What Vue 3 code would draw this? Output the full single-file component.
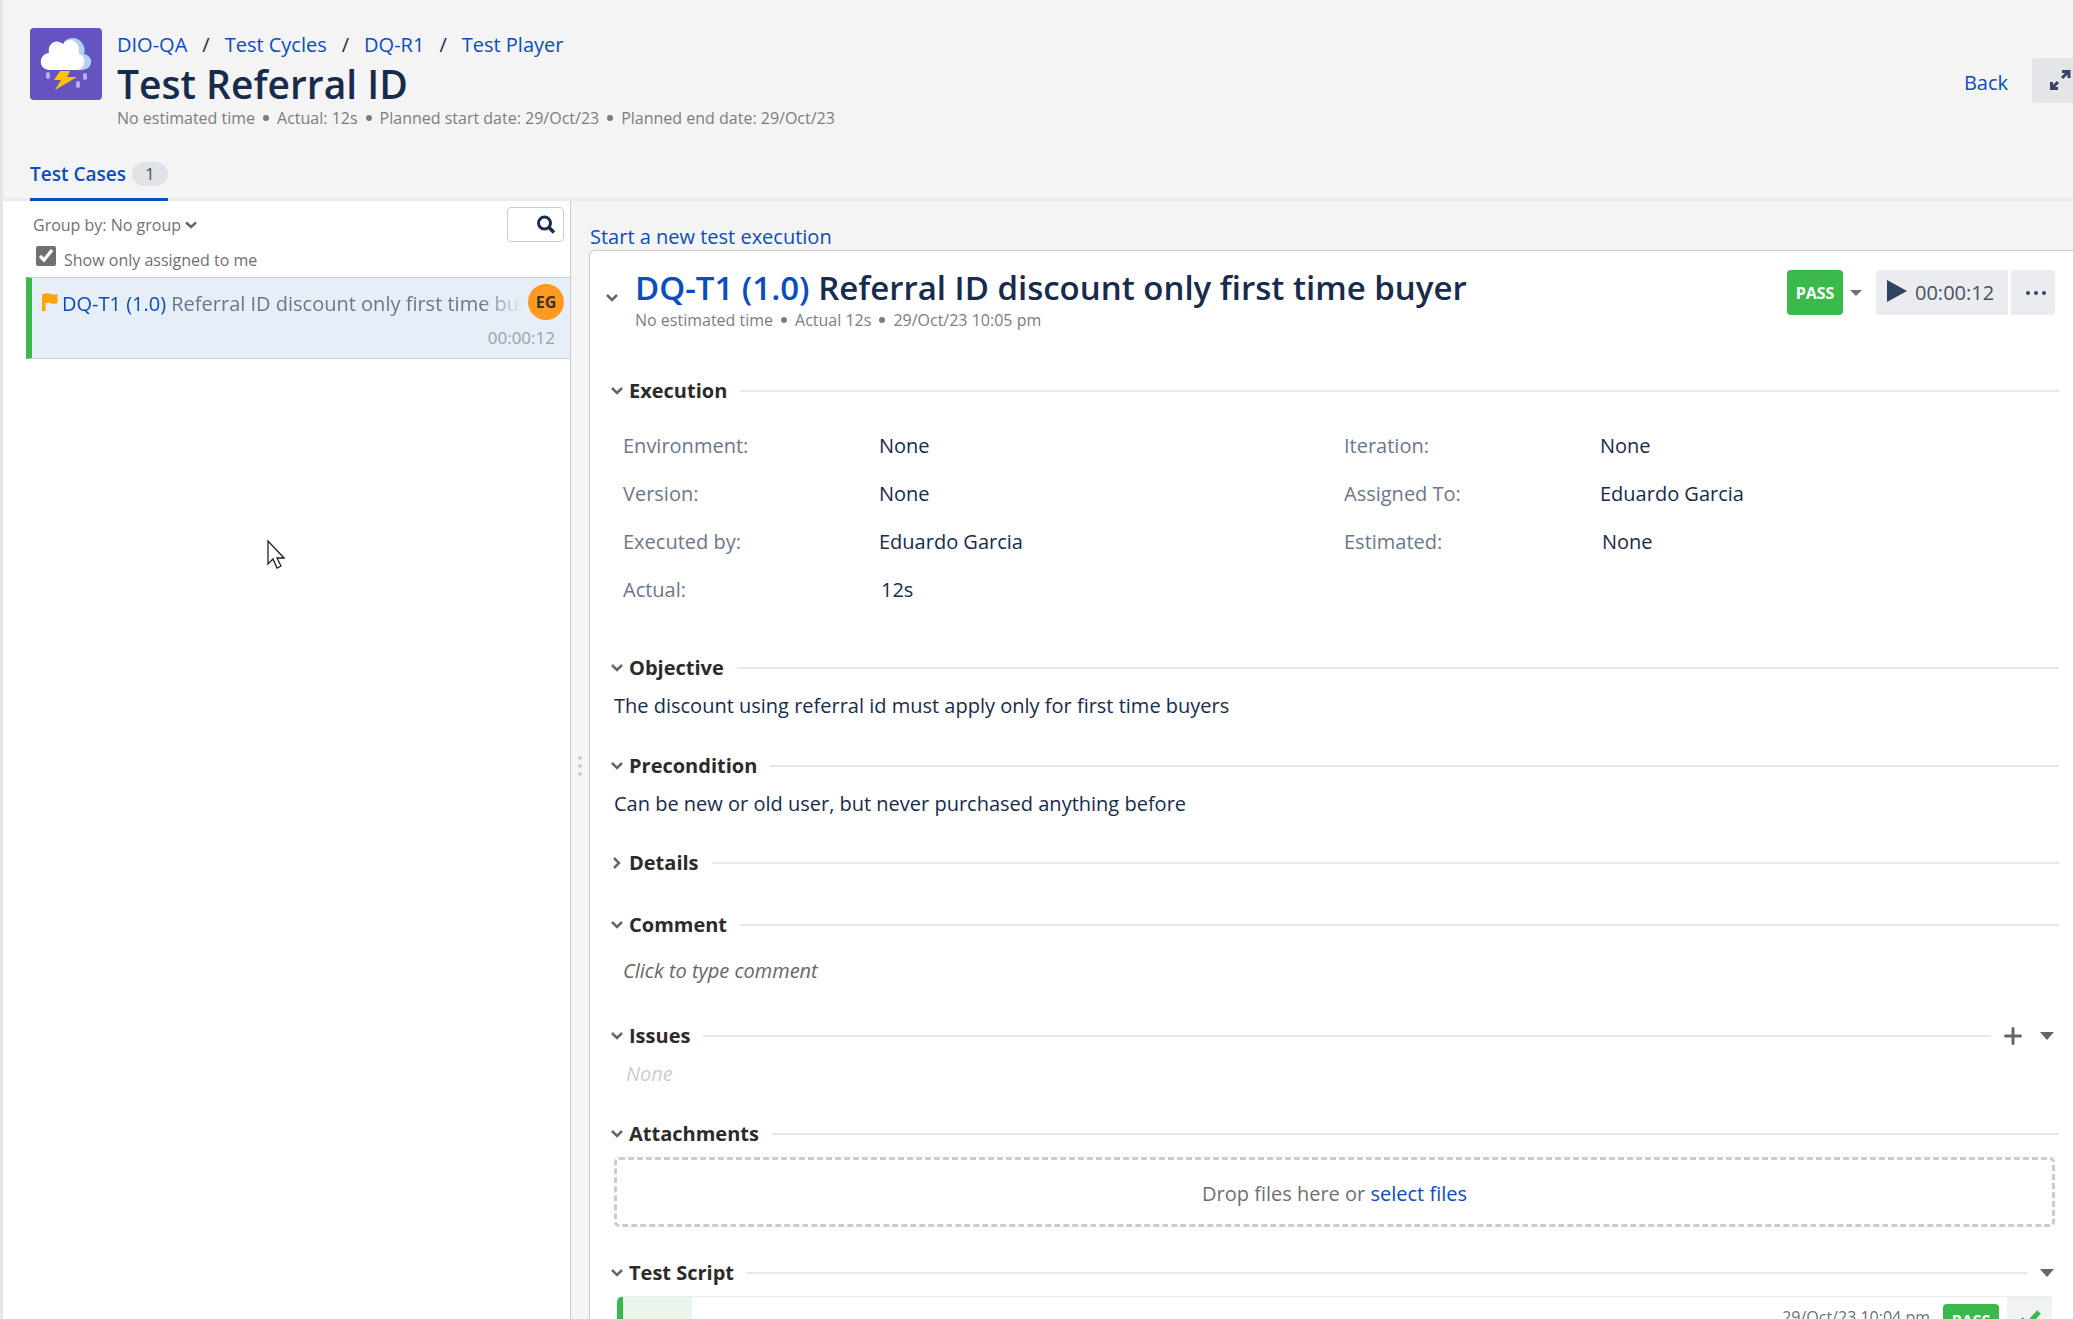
<script setup>
import { ref } from 'vue'

const crumbs = ['DIO-QA', 'Test Cycles', 'DQ-R1', 'Test Player']
const cycleMeta = ['No estimated time', 'Actual: 12s', 'Planned start date: 29/Oct/23', 'Planned end date: 29/Oct/23']
const caseMeta = ['No estimated time', 'Actual 12s', '29/Oct/23 10:05 pm']
const onlyMine = ref(true)

const fieldColumns = [
  [
    { label: 'Environment:', value: 'None' },
    { label: 'Version:', value: 'None' },
    { label: 'Executed by:', value: 'Eduardo Garcia' },
    { label: 'Actual:', value: '12s', time: true },
  ],
  [
    { label: 'Iteration:', value: 'None' },
    { label: 'Assigned To:', value: 'Eduardo Garcia' },
    { label: 'Estimated:', value: 'None', time: true },
  ],
]

const sections = [
  { id: 'execution', title: 'Execution', open: true },
  { id: 'objective', title: 'Objective', open: true, text: 'The discount using referral id must apply only for first time buyers' },
  { id: 'precondition', title: 'Precondition', open: true, text: 'Can be new or old user, but never purchased anything before' },
  { id: 'details', title: 'Details', open: false },
  { id: 'comment', title: 'Comment', open: true },
  { id: 'issues', title: 'Issues', open: true, add: true, menu: true },
  { id: 'attachments', title: 'Attachments', open: true },
  { id: 'script', title: 'Test Script', open: true, menu: true },
]
</script>

<template>
  <div class="page">
    <header class="top">
      <div class="cycle">
        <svg class="logo" viewBox="0 0 72 72" aria-hidden="true">
          <rect width="72" height="72" rx="4" fill="#6554c0" />
          <path d="M34 14c4-5 14-6 18 1 3 4 3 8 2 11 5 1 8 5 7 9-1 5-5 7-10 7H36z" fill="#b3d0fb" />
          <path d="M20 42c-12 0-12-16-1-17-2-10 8-15 14-9 5-8 18-4 16 10 8 2 7 16-3 16z" fill="#fff" />
          <path d="M30 43h10l-3 6h10L25 62l6-10h-7z" fill="#ffc400" />
          <g fill="#b8acf0">
            <rect x="16" y="44" width="4" height="7" rx="2" />
            <rect x="53" y="45" width="4" height="7" rx="2" />
            <rect x="46" y="53" width="4" height="7" rx="2" />
          </g>
        </svg>
        <div class="cycle-text">
          <nav class="crumbs" aria-label="Breadcrumb">
            <template v-for="(c, i) in crumbs" :key="c">
              <span v-if="i" class="slash">/</span>
              <a href="#">{{ c }}</a>
            </template>
          </nav>
          <h1>Test Referral ID</h1>
          <ul class="meta">
            <li v-for="m in cycleMeta" :key="m">{{ m }}</li>
          </ul>
        </div>
        <a class="back" href="#">Back</a>
        <button class="expand" type="button" aria-label="Full screen">
          <svg width="22" height="22" viewBox="0 0 22 22" fill="none" stroke="#344563" stroke-width="3">
            <path d="M13 9l6-6M13 2.500h7V9M9 13l-6 6M2.500 13v6.500H9" />
          </svg>
        </button>
      </div>
      <nav class="tabs">
        <a class="tab" href="#">Test Cases <span class="count">1</span></a>
      </nav>
    </header>

    <div class="body">
      <aside class="side">
        <div class="filters">
          <button class="group" type="button">
            Group by: No group
            <svg width="12" height="8" viewBox="0 0 12 8" fill="none" stroke="#666" stroke-width="2.500"><path d="M1 1.500l5 4.500 5-4.500" /></svg>
          </button>
          <button class="search" type="button" aria-label="Search">
            <svg width="20" height="20" viewBox="0 0 20 20" fill="none" stroke="#172b4d">
              <circle cx="8.500" cy="8" r="6" stroke-width="3" /><path d="M13 12.500l5 5" stroke-width="3.500" />
            </svg>
          </button>
        </div>
        <label class="mine">
          <input v-model="onlyMine" type="checkbox" />
          <span>Show only assigned to me</span>
        </label>
        <div class="case">
          <div class="case-main">
            <svg class="flag" width="16" height="19" viewBox="0 0 16 19" aria-hidden="true">
              <path d="M0 1.500C4-.5 7 .2 9 1s4 .8 6.500 0v9c-3 1.200-5 1-7 .3-2-.7-3.500-.8-5 0V18H0z" fill="#ffa408" />
            </svg>
            <p class="case-name"><a href="#">DQ-T1 (1.0)</a> Referral ID discount only first time buyer</p>
            <span class="avatar">EG</span>
          </div>
          <span class="case-time">00:00:12</span>
        </div>
      </aside>

      <div class="splitter" aria-hidden="true"><i></i><i></i><i></i></div>

      <main class="main">
        <a class="start" href="#">Start a new test execution</a>
        <article class="card">
          <div class="card-head">
            <button class="toggle" type="button" aria-label="Collapse">
              <svg width="12" height="8" viewBox="0 0 12 8" fill="none" stroke="#666" stroke-width="2.500"><path d="M1 1l5 5 5-5" /></svg>
            </button>
            <div class="card-title">
              <h2><a href="#">DQ-T1 (1.0)</a> Referral ID discount only first time buyer</h2>
              <ul class="meta">
                <li v-for="m in caseMeta" :key="m">{{ m }}</li>
              </ul>
            </div>
            <div class="actions">
              <button class="pass" type="button">PASS</button>
              <button class="caret" type="button" aria-label="Change status">
                <svg width="12" height="6" viewBox="0 0 12 6"><path d="M0 0h12L6 6z" fill="#707070" /></svg>
              </button>
              <button class="timer" type="button">
                <svg width="20" height="22" viewBox="0 0 20 22"><path d="M0 0l20 11L0 22z" fill="#2f4362" /></svg>
                <span>00:00:12</span>
              </button>
              <button class="more" type="button" aria-label="More">
                <svg width="20" height="4" viewBox="0 0 20 4" fill="#344563"><circle cx="2" cy="2" r="2" /><circle cx="10" cy="2" r="2" /><circle cx="18" cy="2" r="2" /></svg>
              </button>
            </div>
          </div>

          <section v-for="s in sections" :key="s.id" class="section" :class="s.id">
            <div class="section-head">
              <button class="section-toggle" type="button">
                <svg v-if="s.open" width="12" height="12" viewBox="0 0 12 12" fill="none" stroke="#666" stroke-width="2.500"><path d="M1 3l5 5 5-5" /></svg>
                <svg v-else width="12" height="12" viewBox="0 0 12 12" fill="none" stroke="#666" stroke-width="2.500"><path d="M3 1l5 5-5 5" /></svg>
                {{ s.title }}
              </button>
              <span class="rule"></span>
              <button v-if="s.add" class="plain" type="button" aria-label="Add issue">
                <svg width="18" height="18" viewBox="0 0 18 18" stroke="#666" stroke-width="3" stroke-linecap="round"><path d="M9 1.500v15M1.500 9h15" /></svg>
              </button>
              <button v-if="s.menu" class="plain" type="button" aria-label="Section menu">
                <svg width="14" height="8" viewBox="0 0 14 8"><path d="M0 0h14L7 8z" fill="#666" /></svg>
              </button>
            </div>

            <div v-if="s.id === 'execution'" class="fields">
              <dl v-for="(col, i) in fieldColumns" :key="i">
                <div v-for="f in col" :key="f.label" class="field">
                  <dt>{{ f.label }}</dt>
                  <dd :class="{ time: f.time }">{{ f.value }}</dd>
                </div>
              </dl>
            </div>
            <p v-else-if="s.text" class="text">{{ s.text }}</p>
            <button v-else-if="s.id === 'comment'" class="comment-box" type="button">Click to type comment</button>
            <p v-else-if="s.id === 'issues'" class="none">None</p>
            <div v-else-if="s.id === 'attachments'" class="drop">Drop files here or&nbsp;<a href="#">select files</a></div>
            <div v-else-if="s.id === 'script'" class="step">
              <div class="step-index"></div>
              <span class="step-date">29/Oct/23 10:04 pm</span>
              <button class="step-pass" type="button">PASS</button>
              <button class="step-check" type="button" aria-label="Pass step">
                <svg width="22" height="18" viewBox="0 0 22 18" fill="none" stroke="#3bb94b" stroke-width="5"><path d="M2 9l6 6L20 2" /></svg>
              </button>
            </div>
          </section>
        </article>
      </main>
    </div>

    <svg class="pointer" width="18" height="29" viewBox="0 0 18 29" aria-hidden="true">
      <path d="M1 1v23l5-5 4 9 4-2-4-8h7z" fill="#fff" stroke="#222" stroke-width="1.300" />
    </svg>
  </div>
</template>

<style>
body {
  margin: 0;
}
</style>

<style scoped>
.page {
  position: relative;
  display: flex;
  flex-direction: column;
  height: 100vh;
  overflow: hidden;
  box-sizing: border-box;
  border-left: 3px solid #e6e6e6;
  background: #f4f4f4;
  color: #172b4d;
  font-family: "Open Sans", "Noto Sans", sans-serif;
  font-size: 20px;
  line-height: 28px;
}
.page * {
  box-sizing: border-box;
}
a {
  color: #0b4cc0;
  text-decoration: none;
}
button {
  border: 0;
  padding: 0;
  background: none;
  color: inherit;
  font: inherit;
}
svg {
  flex: none;
  display: block;
}
h1, h2, p, ul, dl, dd {
  margin: 0;
  padding: 0;
}

/* header */
.top {
  flex: none;
  border-bottom: 3px solid #ebebeb;
}
.cycle {
  display: flex;
  padding: 28px 0 0 27px;
}
.logo {
  width: 72px;
  height: 72px;
}
.cycle-text {
  flex: 1;
  padding-left: 15px;
}
.crumbs {
  display: flex;
  gap: 15px;
  line-height: 34px;
}
h1 {
  font-size: 39px;
  font-weight: 600;
  line-height: 44px;
}
.meta {
  display: flex;
  list-style: none;
  color: #7d7d7d;
  font-size: 16px;
  line-height: 24px;
}
.meta li + li::before {
  content: "";
  display: inline-block;
  width: 6px;
  height: 6px;
  margin: 0 8px;
  border-radius: 50%;
  background: #7d7d7d;
  vertical-align: 3px;
}
.back {
  margin: 41px 24px 0 0;
}
.expand {
  display: flex;
  align-items: center;
  width: 57px;
  height: 45px;
  margin: 30px -16px 0 0;
  padding: 0 0 2px 17px;
  border-radius: 4px;
  background: #e4e5e9;
}
.tabs {
  display: flex;
  padding: 28px 0 0 27px;
}
.tab {
  display: flex;
  align-items: center;
  gap: 6px;
  height: 43px;
  margin-bottom: -3px;
  padding-bottom: 8px;
  border-bottom: 3px solid #0b4fb8;
  font-size: 19px;
  font-weight: 600;
}
.count {
  width: 36px;
  border-radius: 12px;
  background: #e0e2e7;
  color: #42526e;
  font-size: 17px;
  font-weight: 400;
  line-height: 24px;
  text-align: center;
}

/* body */
.body {
  flex: 1;
  display: flex;
  min-height: 0;
}
.side {
  flex: none;
  width: 568px;
  border-right: 1px solid #ccc;
  background: #fff;
  color: #707070;
  font-size: 16px;
}
.filters {
  display: flex;
  justify-content: space-between;
  padding: 6px 6px 0 30px;
}
.group {
  display: flex;
  align-items: center;
  gap: 4px;
  height: 35px;
}
.search {
  display: flex;
  align-items: center;
  justify-content: flex-end;
  width: 57px;
  height: 35px;
  padding-right: 7px;
  border: 1px solid #ccc;
  border-radius: 4px;
  background: #fff;
}
.mine {
  display: flex;
  gap: 8px;
  height: 35px;
  padding: 4px 0 0 33px;
}
.mine input {
  width: 20px;
  height: 20px;
  margin: 0;
  accent-color: #707070;
}
.case {
  display: flex;
  flex-direction: column;
  height: 82px;
  margin-left: 23px;
  padding: 6px 6px 0 10px;
  border: solid #ccd0d6;
  border-width: 1px 0;
  border-left: 6px solid #3bb94b;
  background: #e6eef7;
}
.case-main {
  display: flex;
  align-items: center;
}
.flag {
  margin-right: 4px;
}
.case-name {
  flex: 1;
  min-width: 0;
  overflow: hidden;
  padding-top: 3px;
  color: #6b778c;
  font-size: 20px;
  white-space: nowrap;
  mask-image: linear-gradient(to right, #000 90%, transparent 99%);
}
.avatar {
  width: 36px;
  height: 36px;
  border-radius: 50%;
  background: #ff991f;
  color: #333;
  font-size: 16px;
  font-weight: 700;
  line-height: 36px;
  text-align: center;
}
.case-time {
  align-self: flex-end;
  margin-right: 9px;
  font-size: 17px;
  line-height: 36px;
  color: #9aa0ab;
}
.splitter {
  display: flex;
  flex: none;
  flex-direction: column;
  align-items: center;
  justify-content: center;
  gap: 4px;
  width: 18px;
  padding-top: 12px;
}
.splitter i {
  width: 4px;
  height: 4px;
  border-radius: 50%;
  background: #ccc;
}
.main {
  flex: 1;
  display: flex;
  flex-direction: column;
  align-items: stretch;
  min-width: 0;
}
.start {
  align-self: flex-start;
  padding: 22px 0 0 1px;
  line-height: 27px;
}
.card {
  flex: 1;
  min-height: 0;
  overflow: hidden;
  padding: 0 14px 0 21px;
  border: 1px solid #ccc;
  border-width: 1px 0 0 1px;
  border-radius: 6px 0 0 0;
  background: #fff;
}
.card-head {
  display: flex;
  height: 126px;
  padding: 16px 4px 0 0;
}
.toggle {
  width: 29px;
  height: 62px;
  margin-left: -5px;
}
.card-title {
  flex: 1;
}
h2 {
  font-size: 33px;
  font-weight: 600;
  line-height: 41px;
}
.actions {
  display: flex;
  height: 45px;
  margin-top: 3px;
}
.pass, .step-pass {
  width: 56px;
  border-radius: 4px;
  background: #3bb94b;
  color: #fff;
  font-size: 16px;
  font-weight: 700;
}
.caret {
  display: flex;
  align-items: center;
  justify-content: center;
  width: 25px;
}
.timer {
  display: flex;
  align-items: center;
  gap: 8px;
  width: 132px;
  margin-left: 8px;
  padding: 0 0 3px 11px;
  border-radius: 4px 0 0 4px;
  background: #ebecf0;
  color: #4a5160;
}
.timer span {
  padding-top: 4px;
}
.more {
  display: flex;
  align-items: center;
  justify-content: center;
  width: 44px;
  margin-left: 3px;
  padding-left: 6px;
  border-radius: 0 4px 4px 0;
  background: #ebecf0;
}

/* sections */
.section {
  margin-bottom: 32px;
}
.section.execution {
  margin-bottom: 40px;
}
.section.precondition {
  margin-bottom: 31px;
}
.section.details {
  margin-bottom: 34px;
}
.section.comment {
  margin-bottom: 37px;
}
.section-head {
  display: flex;
  align-items: center;
  height: 28px;
}
.section-toggle {
  display: flex;
  align-items: center;
  gap: 6px;
  margin-right: 13px;
  color: #2b2b2b;
  font-weight: 700;
}
.rule {
  flex: 1;
  height: 2px;
  background: #e6e6e6;
}
.plain {
  margin: 0 5px 0 13px;
}
.fields {
  display: grid;
  grid-template-columns: 1fr 1fr;
  column-gap: 10px;
  padding: 17px 4px 0 12px;
}
.field {
  display: grid;
  grid-template-columns: 256px 1fr;
  line-height: 48px;
}
.field dt {
  color: #6b778c;
}
.field dd.time {
  padding-left: 2px;
}
.text {
  padding: 10px 0 0 3px;
}
.comment-box {
  display: block;
  padding: 18px 0 0 12px;
  color: #666;
  font-style: italic;
}
.none {
  padding: 10px 0 0 15px;
  color: #ccc;
  font-style: italic;
}
.drop {
  display: flex;
  align-items: center;
  justify-content: center;
  height: 70px;
  margin: 9px 4px 0 3px;
  padding-top: 3px;
  border: 3px dashed #ccc;
  border-radius: 5px;
  color: #707070;
}
.step {
  display: flex;
  height: 90px;
  margin: 9px 7px 0 6px;
  border-top: 1px solid #e9ebee;
  border-left: 6px solid #3bb94b;
  border-radius: 6px 0 0 0;
  color: #707070;
  font-size: 16px;
}
.step-index {
  width: 69px;
  margin-right: auto;
  background: #eaf6ec;
}
.step-date {
  margin: 6px 13px 0 0;
}
.step-pass {
  height: 33px;
  margin-top: 7px;
}
.step-check {
  display: flex;
  justify-content: center;
  width: 45px;
  margin-left: 8px;
  padding-top: 13px;
  background: #f1f2f4;
}

.pointer {
  position: absolute;
  left: 264px;
  top: 540px;
}
</style>
